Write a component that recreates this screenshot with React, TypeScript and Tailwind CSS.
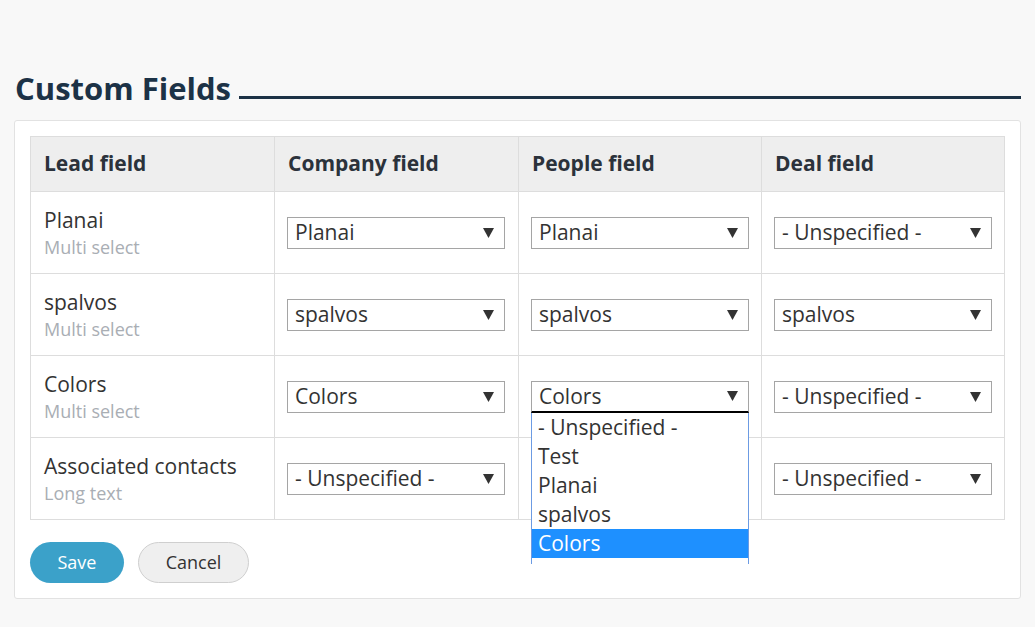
import React from 'react';

type Row = {
  name: string;
  kind: string;
  company: string;
  people: string;
  deal: string;
  open?: boolean;
  covered?: boolean;
};

const rows: Row[] = [
  { name: 'Planai', kind: 'Multi select', company: 'Planai', people: 'Planai', deal: '- Unspecified -' },
  { name: 'spalvos', kind: 'Multi select', company: 'spalvos', people: 'spalvos', deal: 'spalvos' },
  { name: 'Colors', kind: 'Multi select', company: 'Colors', people: 'Colors', deal: '- Unspecified -', open: true },
  { name: 'Associated contacts', kind: 'Long text', company: '- Unspecified -', people: 'Planai', deal: '- Unspecified -', covered: true },
];

const options = ['- Unspecified -', 'Test', 'Planai', 'spalvos', 'Colors'];

function Arrow() {
  return (
    <svg width="11" height="10" viewBox="0 0 11 10" className="shrink-0">
      <polygon points="0,0 11,0 5.5,10" fill="#333" />
    </svg>
  );
}

function FakeSelect({ value, open, covered }: { value: string; open?: boolean; covered?: boolean }) {
  return (
    <div className={covered ? 'invisible relative w-[218px]' : 'relative w-[218px]'}>
      <div
        className={
          open
            ? 'flex h-[32px] items-center justify-between border border-[#a5a5a5] border-b-2 border-b-black pl-[7px] pr-[10px] bg-white'
            : 'flex h-[32px] items-center justify-between border border-[#a5a5a5] pl-[7px] pr-[10px] bg-white'
        }
      >
        <span className="text-[21px] leading-none text-[#333]">{value}</span>
        <Arrow />
      </div>
      {open && (
        <div className="absolute left-0 top-[32px] z-10 h-[151px] w-[218px] overflow-hidden border-x border-[#6c9be3] bg-white">
          {options.map((o) => (
            <div
              key={o}
              className={
                o === value
                  ? 'h-[29px] bg-[#1e90ff] pl-[6px] text-[21px] leading-[29px] text-white'
                  : 'h-[29px] pl-[6px] text-[21px] leading-[29px] text-[#333]'
              }
            >
              {o}
            </div>
          ))}
        </div>
      )}
    </div>
  );
}

export default function App() {
  return (
    <div className="min-h-[627px] bg-[#f8f8f8] pl-[14px] pr-[14px] pt-[67px] font-['Open_Sans',sans-serif]">
      <div className="flex items-end gap-[8px]">
        <h1 className="pl-[1px] text-[31px] font-bold leading-[42px] text-[#1c3246]">Custom Fields</h1>
        <div className="mb-[10px] h-[3px] flex-1 bg-[#1c3246]" />
      </div>

      <div className="mt-[11px] rounded-[3px] border border-[#e2e2e2] bg-white px-[15px] pt-[15px] pb-[15px]">
        <table className="w-[975px] table-fixed border-collapse">
          <colgroup>
            <col className="w-[244px]" />
            <col className="w-[244px]" />
            <col className="w-[243px]" />
            <col className="w-[243px]" />
          </colgroup>
          <thead>
            <tr className="h-[55px] bg-[#eeeeee]">
              {['Lead field', 'Company field', 'People field', 'Deal field'].map((h) => (
                <th
                  key={h}
                  className="border border-[#dddddd] px-[13px] text-left text-[21px] font-bold text-[#2b323b]"
                >
                  {h}
                </th>
              ))}
            </tr>
          </thead>
          <tbody>
            {rows.map((r) => (
              <tr key={r.name} className="h-[82px]">
                <td className="border border-[#dddddd] px-[13px] align-middle">
                  <div className="text-[21px] leading-[28px] text-[#333]">{r.name}</div>
                  <div className="text-[18px] leading-[26px] text-[#a9aeb4]">{r.kind}</div>
                </td>
                <td className="border border-[#dddddd] px-[12px] align-middle">
                  <FakeSelect value={r.company} />
                </td>
                <td className="border border-[#dddddd] px-[12px] align-middle">
                  <FakeSelect value={r.people} open={r.open} covered={r.covered} />
                </td>
                <td className="border border-[#dddddd] px-[12px] align-middle">
                  <FakeSelect value={r.deal} />
                </td>
              </tr>
            ))}
          </tbody>
        </table>

        <div className="mt-[22px] flex gap-[14px]">
          <button className="h-[41px] w-[94px] rounded-full bg-[#3ba1c9] text-[18px] text-white">Save</button>
          <button className="h-[41px] w-[111px] rounded-full border border-[#cfcfcf] bg-[#efefef] text-[18px] text-[#333]">
            Cancel
          </button>
        </div>
      </div>
    </div>
  );
}
